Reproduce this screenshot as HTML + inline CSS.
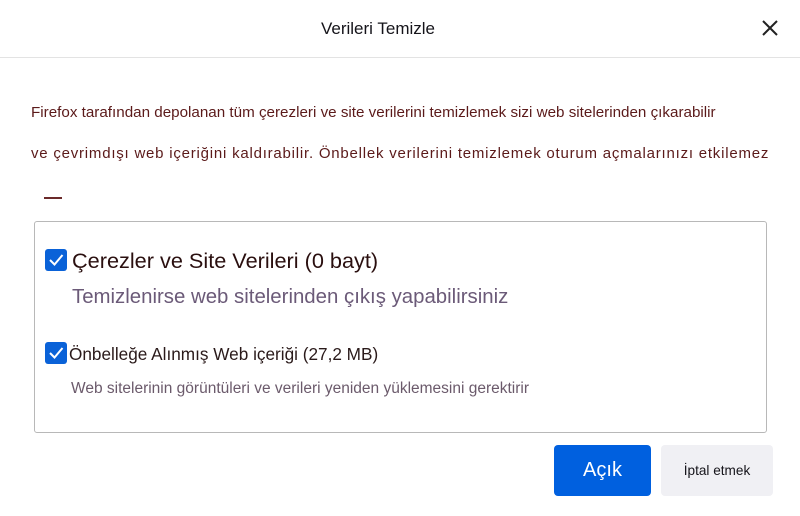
<!DOCTYPE html>
<html><head><meta charset="utf-8"><style>
body{margin:0;width:800px;height:516px;background:#fff;font-family:"Liberation Sans",Arial,sans-serif;position:relative;overflow:hidden}
.a{position:absolute;white-space:nowrap}
.cb{position:absolute;width:22px;height:22px;background:#0a62d8;border-radius:3px}
</style></head><body>
<div class="a" style="left:0;top:0;width:800px;height:57px;border-bottom:1px solid #e3e3e3"></div>
<div class="a" style="left:0;width:756px;top:19px;text-align:center;font-size:17px;color:#15141a">Verileri Temizle</div>
<svg class="a" style="left:760px;top:18px" width="20" height="20" viewBox="0 0 20 20"><path d="M3 3L17 17M17 3L3 17" stroke="#222" stroke-width="2"/></svg>
<div class="a" style="left:31px;top:104px;font-size:15.2px;color:#5b1a1a">Firefox tarafından depolanan tüm çerezleri ve site verilerini temizlemek sizi web sitelerinden çıkarabilir</div>
<div class="a" style="left:31px;top:145px;font-size:15px;letter-spacing:0.78px;color:#5b1a1a">ve çevrimdışı web içeriğini kaldırabilir. Önbellek verilerini temizlemek oturum açmalarınızı etkilemez</div>
<div class="a" style="left:44px;top:197px;width:18px;height:2px;background:#6b2a2a"></div>
<div class="a" style="left:34px;top:221px;width:731px;height:210px;border:1px solid #b8b8b8;border-radius:3px"></div>
<div class="cb" style="left:45px;top:249px"></div>
<svg class="a" style="left:45px;top:249px" width="22" height="22" viewBox="0 0 22 22"><path d="M5 11L9.5 15.5L17.5 6" stroke="#fff" stroke-width="2" fill="none"/></svg>
<div class="a" style="left:72px;top:248px;font-size:21.7px;color:#2a0f0f">Çerezler ve Site Verileri (0 bayt)</div>
<div class="a" style="left:72px;top:286px;font-size:20.4px;color:#6b5a78">Temizlenirse web sitelerinden çıkış yapabilirsiniz</div>
<div class="cb" style="left:45px;top:342px"></div>
<svg class="a" style="left:45px;top:342px" width="22" height="22" viewBox="0 0 22 22"><path d="M5 11L9.5 15.5L17.5 6" stroke="#fff" stroke-width="2" fill="none"/></svg>
<div class="a" style="left:69px;top:344px;font-size:17.2px;color:#2a1a1a">Önbelleğe Alınmış Web içeriği (27,2 MB)</div>
<div class="a" style="left:71px;top:380px;font-size:15.5px;color:#6b5a6b">Web sitelerinin görüntüleri ve verileri yeniden yüklemesini gerektirir</div>
<div class="a" style="left:554px;top:445px;width:97px;height:51px;background:#0060df;border-radius:4px;color:#fff;font-size:20px;text-align:center;line-height:51px">Açık</div>
<div class="a" style="left:661px;top:445px;width:112px;height:51px;background:#f0f0f4;border-radius:4px;color:#15141a;font-size:13.6px;text-align:center;line-height:51px">İptal etmek</div>
</body></html>
